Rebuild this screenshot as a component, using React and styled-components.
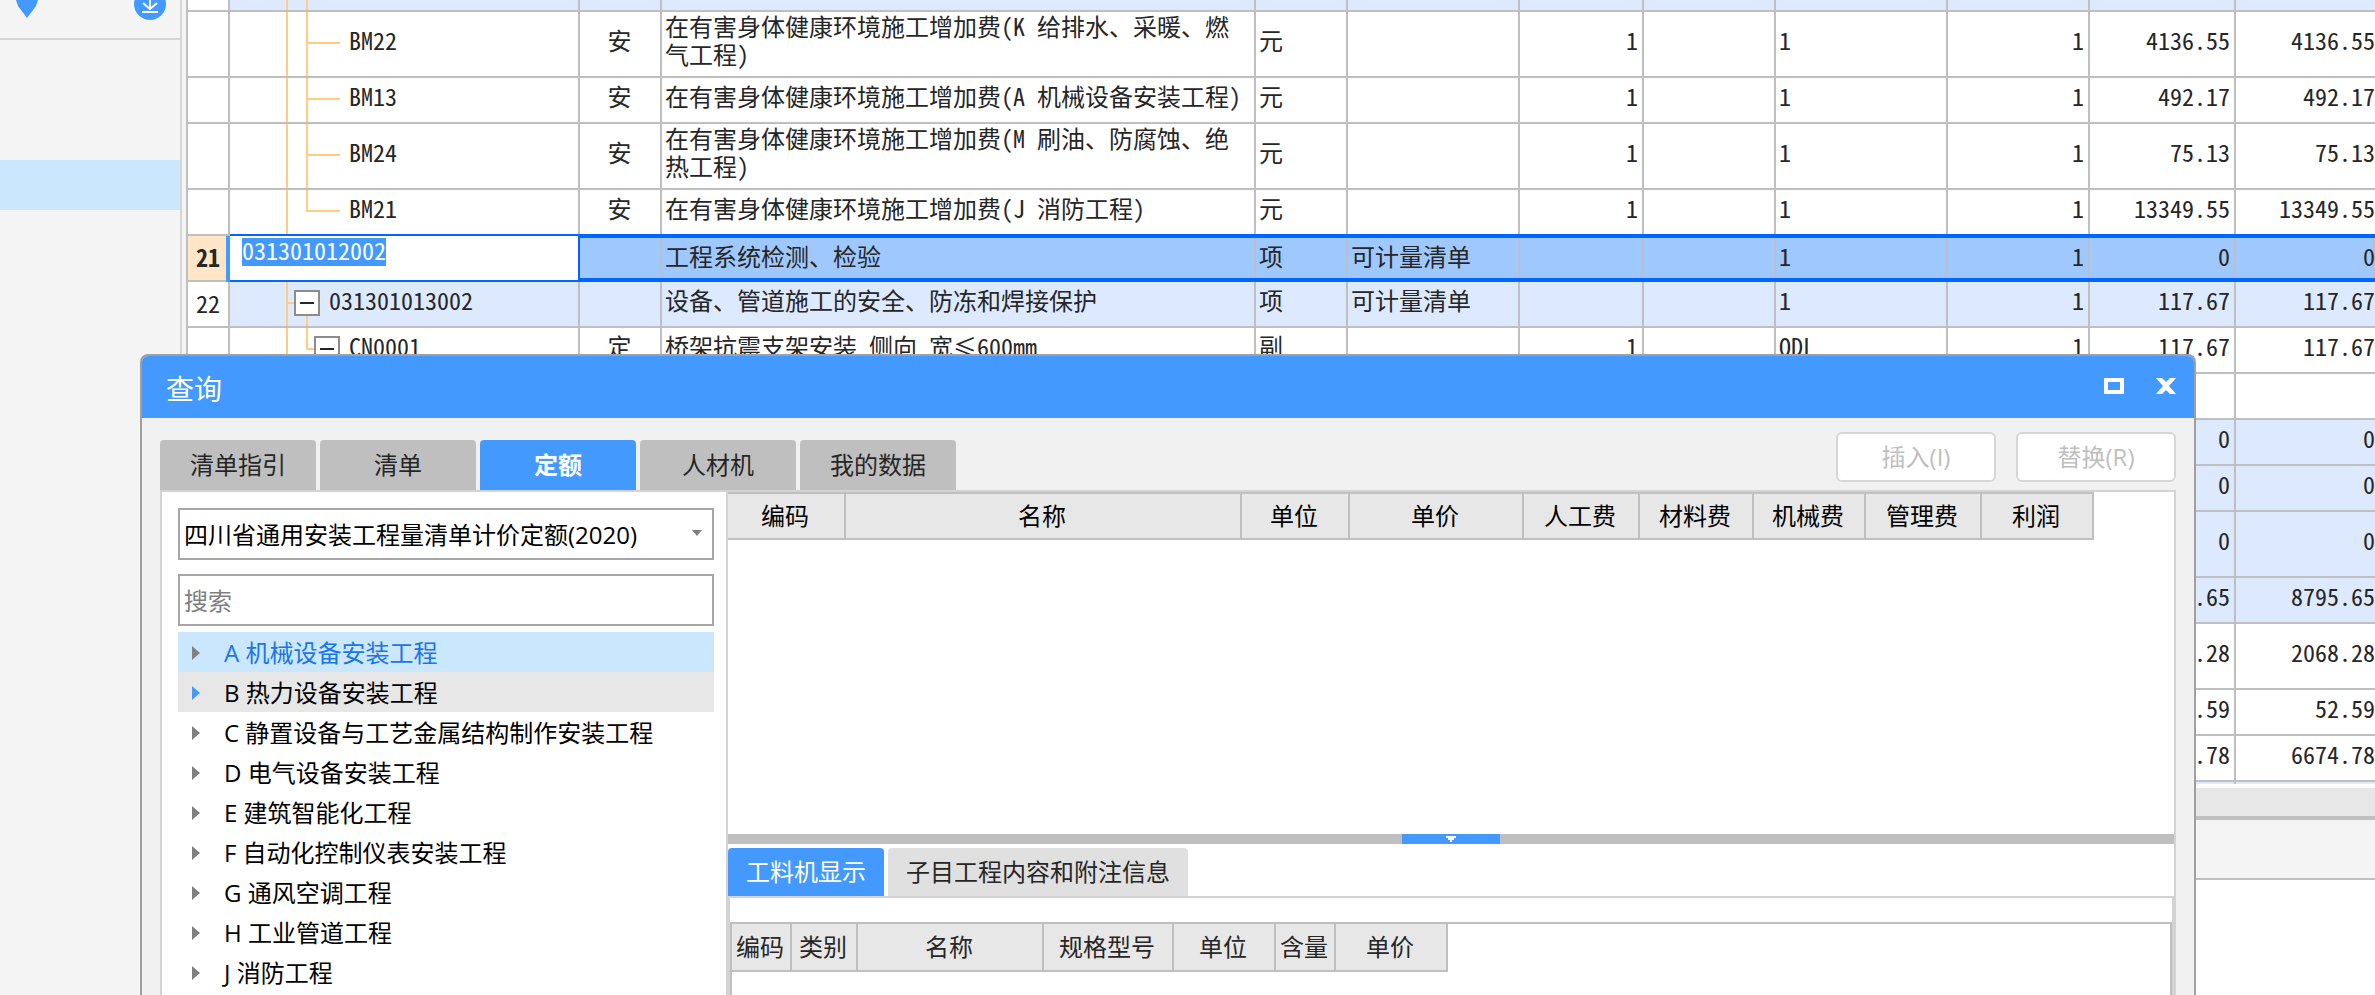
import React from "react";
import styled, { createGlobalStyle } from "styled-components";

const GlobalStyle = createGlobalStyle`
  * {
    box-sizing: border-box;
  }

  body {
    margin: 0;
    overflow: hidden;
    background: #ffffff;
    color: #262626;
    font-family: "Open Sans", "Noto Sans CJK SC", sans-serif;
    font-size: 24px;
    line-height: 28px;
  }

  button,
  input,
  select {
    font: inherit;
  }
`;

const gridFont = `"Noto Sans Mono CJK SC", "Noto Sans CJK SC", "Liberation Mono", monospace`;

const Screen = styled.div`
  position: relative;
  display: flex;
  height: 100vh;
  overflow: hidden;
`;

const Sidebar = styled.aside`
  width: 186px;
  flex: none;
  background: #f4f4f4;
`;

const SidebarInner = styled.div`
  width: 182px;
  height: 100%;
  border-right: 2px solid #d6d6d6;
`;

const SidebarTools = styled.div`
  display: flex;
  justify-content: space-between;
  align-items: flex-start;
  height: 40px;
  padding: 0 14px 0 16px;
  border-bottom: 2px solid #d6d6d6;
`;

const ToolButton = styled.button`
  display: flex;
  padding: 0;
  border: 0;
  background: transparent;
`;

const SidebarActive = styled.div`
  height: 50px;
  margin-top: 120px;
  background: #cbe7fe;
`;

const Workspace = styled.main`
  flex: 1;
  min-width: 0;
  overflow: hidden;
`;

const BillWrap = styled.div`
  height: 784px;
  overflow: hidden;
`;

const BillTable = styled.table`
  width: 100%;
  table-layout: fixed;
  border-collapse: separate;
  border-spacing: 0;
  border-left: 2px solid #bfbfbf;
  font-family: ${gridFont};
`;

const rowColors = {
  item: "#ffffff",
  group: "#dde9fe",
  active: "#9fc8fe",
};

const Cell = styled.td`
  height: ${({ $height }) => $height}px;
  padding: ${({ $flush }) => ($flush ? "0" : "0 4px 8px 3px")};
  vertical-align: middle;
  text-align: ${({ $align }) => $align || "left"};
  background: ${({ $kind }) => rowColors[$kind]};
  border-right: 2px solid #bfbfbf;
  border-bottom: 2px solid #bfbfbf;

  ${({ $kind }) =>
    $kind === "active" &&
    `
    padding: 0 6px 4px 3px;
    border-right: 0;
    border-top: 2px solid #0066ff;
    border-bottom: 4px solid #0066ff;
    box-shadow: 0 -2px 0 #0066ff, inset -2px 0 0 #b8c0c8;
  `}

  &:last-child {
    padding-right: 0;
    border-right: 0;
  }
`;

const NumberCell = styled(Cell)`
  padding: 0 0 2px;
  text-align: center;
  font-weight: ${({ $current }) => ($current ? 700 : 400)};
  background: ${({ $current }) => ($current ? "#ffe6c8" : "#ffffff")};
`;

const EditCell = styled.td`
  padding: 2px 12px;
  vertical-align: top;
  background: #ffffff;
  border-right: 2px solid #0066ff;
  border-bottom: 2px solid #0066ff;
  box-shadow: 0 -2px 0 #0066ff, -4px 0 0 #4499ff;
`;

const CodeInput = styled.input`
  display: block;
  width: 144px;
  height: 28px;
  padding: 0 0 4px;
  border: 0;
  outline: 0;
  background: #4499ff;
  color: #ffffff;
`;

const Tree = styled.div`
  display: flex;
  align-items: center;
  height: ${({ $height }) => $height}px;
`;

const Guide = styled.span`
  flex: none;
  align-self: stretch;
  width: ${({ $width }) => $width}px;
  background: linear-gradient(#ffcc80, #ffcc80) no-repeat right top / 2px
    ${({ $end }) => ($end ? "50%" : "100%")};
`;

const Branch = styled.span`
  flex: none;
  width: ${({ $width }) => $width}px;
  height: 2px;
  margin-bottom: 2px;
  background: #ffcc80;
`;

const Toggle = styled.button`
  position: relative;
  display: flex;
  flex: none;
  align-items: center;
  justify-content: center;
  width: 26px;
  height: 26px;
  margin: 0 0 2px;
  padding: 0;
  border: 2px solid #8c8c8c;
  background: #ffffff;

  &::before {
    content: "";
    width: 14px;
    height: 2px;
    background: #262626;
  }

  &::after {
    content: "";
    position: absolute;
    top: 24px;
    left: 10px;
    width: 2px;
    height: ${({ $stem }) => ($stem ? 10 : 0)}px;
    background: #ffcc80;
  }
`;

const TreeCode = styled.span`
  padding: 0 0 8px 9px;
`;

const TableFooter = styled.div`
  height: 36px;
  border-top: 4px solid #ffffff;
  border-bottom: 4px solid #bfbfbf;
  background: #e7e7e7;
`;

const DetailBar = styled.div`
  height: 60px;
  border-bottom: 2px solid #bfbfbf;
  background: #f4f4f4;
`;

const Dialog = styled.section`
  position: absolute;
  top: 354px;
  right: 179px;
  bottom: 0;
  left: 140px;
  display: flex;
  flex-direction: column;
  overflow: hidden;
  border: 2px solid #a0a0a0;
  border-bottom: 0;
  border-radius: 8px 8px 0 0;
  background: #f1f1f1;
`;

const TitleBar = styled.header`
  display: flex;
  flex: none;
  align-items: center;
  height: 62px;
  padding: 0 18px 0 24px;
  background: #4499ff;
  color: #ffffff;
`;

const Title = styled.h1`
  flex: 1;
  margin: 0;
  padding-top: 4px;
  font-size: 28px;
  font-weight: 400;
  line-height: 36px;
`;

const WindowButtons = styled.div`
  display: flex;
  gap: 32px;
  padding-bottom: 2px;
`;

const WindowButton = styled.button`
  display: flex;
  padding: 0;
  border: 0;
  background: transparent;
`;

const DialogBody = styled.div`
  display: flex;
  flex: 1;
  flex-direction: column;
  min-height: 0;
  padding: 14px 18px 0;
`;

const TopBar = styled.div`
  display: flex;
  flex: none;
  justify-content: space-between;
  height: 58px;
`;

const Tabs = styled.div`
  display: flex;
  align-items: flex-end;
  gap: 4px;
`;

const Tab = styled.button`
  width: 156px;
  height: 50px;
  padding: 0;
  border: 0;
  border-radius: 4px 4px 0 0;
  background: ${({ $active }) => ($active ? "#4499ff" : "#bfbfbf")};
  color: ${({ $active }) => ($active ? "#ffffff" : "#262626")};
  font-weight: ${({ $active }) => ($active ? 700 : 400)};
`;

const Actions = styled.div`
  display: flex;
  gap: 20px;
`;

const ActionButton = styled.button`
  width: 160px;
  height: 50px;
  padding: 0;
  border: 2px solid #d6d6d6;
  border-radius: 6px;
  background: #ffffff;
  color: #bfbfbf;
`;

const Panel = styled.div`
  display: flex;
  flex: 1;
  min-height: 0;
  border: 2px solid #d3d3d3;
  border-bottom: 0;
  background: #ffffff;
`;

const Catalog = styled.div`
  width: 566px;
  flex: none;
  padding: 16px 12px 0 16px;
  border-right: 2px solid #d3d3d3;
`;

const SelectBox = styled.div`
  position: relative;

  svg {
    position: absolute;
    top: 22px;
    right: 12px;
    pointer-events: none;
  }
`;

const LibrarySelect = styled.select`
  display: block;
  width: 100%;
  height: 52px;
  padding: 2px 4px 0;
  appearance: none;
  border: 2px solid #a6a6a6;
  border-radius: 0;
  background: #ffffff;
  color: #000000;
`;

const SearchInput = styled.input`
  display: block;
  width: 100%;
  height: 52px;
  margin: 14px 0 6px;
  padding: 0 4px;
  border: 2px solid #a6a6a6;
  border-radius: 0;

  &::placeholder {
    color: #808080;
  }
`;

const ChapterList = styled.ul`
  margin: 0;
  padding: 0;
  list-style: none;
`;

const chapterColors = {
  selected: "#cbe7fe",
  hover: "#e7e7e7",
};

const Chapter = styled.li`
  display: flex;
  align-items: center;
  gap: 24px;
  height: 40px;
  padding: 2px 0 0 14px;
  background: ${({ $state }) => chapterColors[$state] || "transparent"};
  color: ${({ $state }) => ($state === "selected" ? "#1a75e6" : "#000000")};
`;

const Arrow = styled.span`
  border-top: 7px solid transparent;
  border-bottom: 7px solid transparent;
  border-left: 8px solid
    ${({ $state }) => ($state === "hover" ? "#4499ff" : "#808080")};
`;

const Results = styled.div`
  display: flex;
  flex: 1;
  flex-direction: column;
  min-width: 0;
`;

const ResultArea = styled.div`
  flex: none;
  height: 342px;
`;

const HeadTable = styled.table`
  table-layout: fixed;
  width: ${({ $width }) => $width}px;
  border-collapse: separate;
  border-spacing: 0;
  font-family: ${gridFont};
`;

const HeadCell = styled.th`
  height: ${({ $height }) => $height}px;
  padding: 0 2px 2px 0;
  border-right: 2px solid #bfbfbf;
  border-bottom: 2px solid #bfbfbf;
  background: #e7e7e7;
  color: ${({ $dark }) => ($dark ? "#000000" : "#262626")};
  font-weight: 400;
  white-space: nowrap;
`;

const ResultTable = styled(HeadTable)`
  border-top: 2px solid #bfbfbf;
`;

const Splitter = styled.div`
  display: flex;
  flex: none;
  justify-content: center;
  height: 10px;
  background: #bfbfbf;
`;

const SplitterHandle = styled.button`
  display: flex;
  align-items: center;
  justify-content: center;
  width: 98px;
  padding: 0;
  border: 0;
  background: #4499ff;
`;

const DetailTabs = styled.div`
  display: flex;
  flex: none;
  gap: 4px;
  padding-top: 4px;
  border-bottom: 2px solid #d3d3d3;
`;

const DetailTab = styled.button`
  height: 48px;
  padding: 0 18px;
  border: 0;
  border-radius: 4px 4px 0 0;
  background: ${({ $active }) => ($active ? "#4499ff" : "#e0e0e0")};
  color: ${({ $active }) => ($active ? "#ffffff" : "#262626")};
`;

const DetailPane = styled.div`
  display: flex;
  flex: 1;
  padding-top: 24px;
  border: 2px solid #d3d3d3;
  border-width: 0 2px;
`;

const DetailFrame = styled.div`
  flex: 1;
  border: 2px solid #bfbfbf;
  border-bottom: 0;
`;

const columns = [42, 350, 82, null, 92, 172, 124, 132, 172, 142, 146, 139];

const rows = [
  { height: 10, kind: "group", depth: "line" },
  {
    height: 64,
    kind: "item",
    depth: "leaf",
    code: "BM22",
    type: "安",
    name: "在有害身体健康环境施工增加费(K 给排水、采暖、燃气工程)",
    unit: "元",
    amount: "1",
    formula: "1",
    qty: "1",
    price: "4136.55",
    total: "4136.55",
  },
  {
    height: 44,
    kind: "item",
    depth: "leaf",
    code: "BM13",
    type: "安",
    name: "在有害身体健康环境施工增加费(A 机械设备安装工程)",
    unit: "元",
    amount: "1",
    formula: "1",
    qty: "1",
    price: "492.17",
    total: "492.17",
  },
  {
    height: 64,
    kind: "item",
    depth: "leaf",
    code: "BM24",
    type: "安",
    name: "在有害身体健康环境施工增加费(M 刷油、防腐蚀、绝热工程)",
    unit: "元",
    amount: "1",
    formula: "1",
    qty: "1",
    price: "75.13",
    total: "75.13",
  },
  {
    height: 44,
    kind: "item",
    depth: "last",
    code: "BM21",
    type: "安",
    name: "在有害身体健康环境施工增加费(J 消防工程)",
    unit: "元",
    amount: "1",
    formula: "1",
    qty: "1",
    price: "13349.55",
    total: "13349.55",
  },
  {
    height: 44,
    kind: "active",
    no: "21",
    code: "031301012002",
    name: "工程系统检测、检验",
    unit: "项",
    feature: "可计量清单",
    formula: "1",
    qty: "1",
    price: "0",
    total: "0",
  },
  {
    height: 44,
    kind: "group",
    depth: "root",
    no: "22",
    code: "031301013002",
    name: "设备、管道施工的安全、防冻和焊接保护",
    unit: "项",
    feature: "可计量清单",
    formula: "1",
    qty: "1",
    price: "117.67",
    total: "117.67",
  },
  {
    height: 44,
    kind: "item",
    depth: "child",
    code: "CN0001",
    type: "定",
    name: "桥架抗震支架安装 侧向 宽≤600mm",
    unit: "副",
    amount: "1",
    formula: "QDL",
    qty: "1",
    price: "117.67",
    total: "117.67",
  },
  { height: 44, kind: "item" },
  { height: 44, kind: "group", price: "0", total: "0" },
  { height: 44, kind: "group", price: "0", total: "0" },
  { height: 64, kind: "group", price: "0", total: "0" },
  { height: 44, kind: "group", price: "8795.65", total: "8795.65" },
  { height: 64, kind: "item", price: "2068.28", total: "2068.28" },
  { height: 44, kind: "item", price: "52.59", total: "52.59" },
  { height: 44, kind: "item", price: "6674.78", total: "6674.78" },
  { height: 44, kind: "group" },
];

const chapters = [
  ["A 机械设备安装工程", "selected"],
  ["B 热力设备安装工程", "hover"],
  ["C 静置设备与工艺金属结构制作安装工程"],
  ["D 电气设备安装工程"],
  ["E 建筑智能化工程"],
  ["F 自动化控制仪表安装工程"],
  ["G 通风空调工程"],
  ["H 工业管道工程"],
  ["J 消防工程"],
];

const resultColumns = [
  ["编码", 118],
  ["名称", 396],
  ["单位", 108],
  ["单价", 174],
  ["人工费", 116],
  ["材料费", 114],
  ["机械费", 112],
  ["管理费", 116],
  ["利润", 112],
];

const detailColumns = [
  ["编码", 60],
  ["类别", 66],
  ["名称", 186],
  ["规格型号", 130],
  ["单位", 102],
  ["含量", 60],
  ["单价", 112],
];

const CodeTree = ({ row }) => {
  const { depth, height, code } = row;
  if (!depth) return null;

  return (
    <Tree $height={height}>
      <Guide $width={58} />
      {depth === "root" && (
        <>
          <Branch $width={6} />
          <Toggle $stem aria-label="折叠" />
        </>
      )}
      {depth !== "root" && (
        <Guide $width={20} $end={depth === "last" || depth === "child"} />
      )}
      {(depth === "leaf" || depth === "last") && <Branch $width={32} />}
      {depth === "child" && (
        <>
          <Branch $width={6} />
          <Toggle aria-label="折叠" />
        </>
      )}
      {code && <TreeCode>{code}</TreeCode>}
    </Tree>
  );
};

const BillRow = ({ row }) => {
  const cell = { $kind: row.kind, $height: row.height + 2 };

  return (
    <tr>
      <NumberCell $kind="item" $height={row.height + 2} $current={row.kind === "active"}>
        {row.no}
      </NumberCell>
      {row.kind === "active" ? (
        <EditCell>
          <CodeInput aria-label="编码" defaultValue={row.code} />
        </EditCell>
      ) : (
        <Cell {...cell} $flush>
          <CodeTree row={row} />
        </Cell>
      )}
      <Cell {...cell} $align="center">{row.type}</Cell>
      <Cell {...cell}>{row.name}</Cell>
      <Cell {...cell}>{row.unit}</Cell>
      <Cell {...cell}>{row.feature}</Cell>
      <Cell {...cell} $align="right">{row.amount}</Cell>
      <Cell {...cell} />
      <Cell {...cell}>{row.formula}</Cell>
      <Cell {...cell} $align="right">{row.qty}</Cell>
      <Cell {...cell} $align="right">{row.price}</Cell>
      <Cell {...cell} $align="right">{row.total}</Cell>
    </tr>
  );
};

const HeadRow = ({ items, height, dark }) => (
  <>
    <colgroup>
      {items.map(([label, width]) => (
        <col key={label} width={width} />
      ))}
    </colgroup>
    <thead>
      <tr>
        {items.map(([label]) => (
          <HeadCell key={label} $height={height} $dark={dark}>
            {label}
          </HeadCell>
        ))}
      </tr>
    </thead>
  </>
);

const QueryDialog = () => (
  <Dialog role="dialog" aria-labelledby="query-title">
    <TitleBar>
      <Title id="query-title">查询</Title>
      <WindowButtons>
        <WindowButton aria-label="最大化">
          <svg width="20" height="16" viewBox="0 0 20 16">
            <path d="M0 0h20v16H0zM4 4v8h12V4z" fill="#fff" fillRule="evenodd" />
          </svg>
        </WindowButton>
        <WindowButton aria-label="关闭">
          <svg width="20" height="16" viewBox="0 0 20 16">
            <path d="M0 0h6l4 4 4-4h6l-7 8 7 8h-6l-4-4-4 4H0l7-8z" fill="#fff" />
          </svg>
        </WindowButton>
      </WindowButtons>
    </TitleBar>
    <DialogBody>
      <TopBar>
        <Tabs role="tablist">
          <Tab role="tab">清单指引</Tab>
          <Tab role="tab">清单</Tab>
          <Tab role="tab" $active>定额</Tab>
          <Tab role="tab">人材机</Tab>
          <Tab role="tab">我的数据</Tab>
        </Tabs>
        <Actions>
          <ActionButton disabled>插入(I)</ActionButton>
          <ActionButton disabled>替换(R)</ActionButton>
        </Actions>
      </TopBar>
      <Panel>
        <Catalog>
          <SelectBox>
            <LibrarySelect aria-label="定额库">
              <option>四川省通用安装工程量清单计价定额(2020)</option>
            </LibrarySelect>
            <svg width="10" height="6" viewBox="0 0 10 6">
              <path d="M0 0h10L5 6z" fill="#808080" />
            </svg>
          </SelectBox>
          <SearchInput aria-label="搜索" placeholder="搜索" />
          <ChapterList>
            {chapters.map(([label, state]) => (
              <Chapter key={label} $state={state}>
                <Arrow $state={state} />
                {label}
              </Chapter>
            ))}
          </ChapterList>
        </Catalog>
        <Results>
          <ResultArea>
            <ResultTable $width={1366}>
              <HeadRow items={resultColumns} height={46} dark />
            </ResultTable>
          </ResultArea>
          <Splitter>
            <SplitterHandle aria-label="收起">
              <svg width="10" height="6" viewBox="0 0 10 6">
                <path d="M0 0h10v2H8v2H6v2H4V4H2V2H0z" fill="#fff" />
              </svg>
            </SplitterHandle>
          </Splitter>
          <DetailTabs role="tablist">
            <DetailTab role="tab" $active>工料机显示</DetailTab>
            <DetailTab role="tab">子目工程内容和附注信息</DetailTab>
          </DetailTabs>
          <DetailPane>
            <DetailFrame>
              <HeadTable $width={716}>
                <HeadRow items={detailColumns} height={48} />
              </HeadTable>
            </DetailFrame>
          </DetailPane>
        </Results>
      </Panel>
    </DialogBody>
  </Dialog>
);

const App = () => (
  <>
    <GlobalStyle />
    <Screen>
      <Sidebar>
        <SidebarInner>
          <SidebarTools>
            <ToolButton aria-label="筛选">
              <svg width="22" height="18" viewBox="0 0 22 18">
                <path d="M0 0h22l-2 6-9 12L2 6z" fill="#4499ff" />
              </svg>
            </ToolButton>
            <ToolButton aria-label="下载">
              <svg width="32" height="20" viewBox="0 0 32 20">
                <circle cx="16" cy="4" r="16" fill="#4499ff" />
                <path d="M16 0v10M9 3l7 6 7-6M8 12h16" stroke="#fff" strokeWidth="2" fill="none" />
              </svg>
            </ToolButton>
          </SidebarTools>
          <SidebarActive />
        </SidebarInner>
      </Sidebar>
      <Workspace>
        <BillWrap>
          <BillTable>
            <colgroup>
              {columns.map((width, i) => (
                <col key={i} width={width || undefined} />
              ))}
            </colgroup>
            <tbody>
              {rows.map((row, i) => (
                <BillRow key={i} row={row} />
              ))}
            </tbody>
          </BillTable>
        </BillWrap>
        <TableFooter />
        <DetailBar />
      </Workspace>
      <QueryDialog />
    </Screen>
  </>
);

export default App;
